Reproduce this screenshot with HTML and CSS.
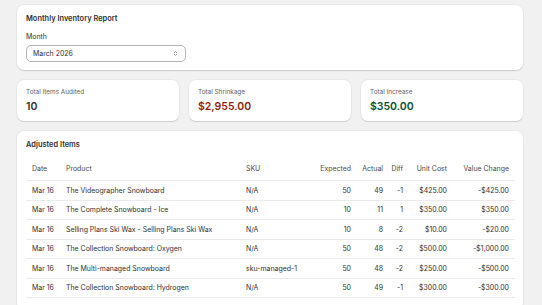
FILE: index.html
```html
<!DOCTYPE html>
<html lang="en">
<head>
    <meta charset="UTF-8">
    <meta name="viewport" content="width=device-width, initial-scale=1.0">
    <title>Monthly Inventory Report</title>
    <link rel="stylesheet" href="styles.css">
</head>
<body>
    <div class="page">
        <div class="card">
            <h2 class="card-title">Monthly Inventory Report</h2>
            <label class="field-label">Month</label>
            <div class="select">
                <span>March 2026</span>
                <svg width="7" height="7" viewBox="0 0 20 20"><path d="M6.5 8 10 4.5 13.5 8M6.5 12 10 15.5 13.5 12" fill="none" stroke="#4a4a4a" stroke-width="1.6" stroke-linecap="round" stroke-linejoin="round"/></svg>
            </div>
        </div>

        <div class="stats">
            <div class="card stat">
                <div class="stat-label">Total Items Audited</div>
                <div class="stat-value">10</div>
            </div>
            <div class="card stat">
                <div class="stat-label">Total Shrinkage</div>
                <div class="stat-value critical">$2,955.00</div>
            </div>
            <div class="card stat">
                <div class="stat-label">Total Increase</div>
                <div class="stat-value success">$350.00</div>
            </div>
        </div>

        <div class="card items">
            <h2 class="card-title">Adjusted Items</h2>
            <table class="data-table">
                <colgroup>
                    <col style="width:34px"><col style="width:180px"><col style="width:70px"><col style="width:47px">
                    <col style="width:32px"><col style="width:20px"><col style="width:44px"><col style="width:62px">
                </colgroup>
                <thead>
                    <tr>
                        <th>Date</th><th>Product</th><th>SKU</th>
                        <th class="num">Expected</th><th class="num">Actual</th><th class="num">Diff</th>
                        <th class="num">Unit Cost</th><th class="num">Value Change</th>
                    </tr>
                </thead>
                <tbody id="rows"></tbody>
            </table>
        </div>
    </div>

    <script>
        const items = [
            ['Mar 16', 'The Videographer Snowboard', 'N/A', 50, 49, -1, '$425.00', '-$425.00'],
            ['Mar 16', 'The Complete Snowboard - Ice', 'N/A', 10, 11, 1, '$350.00', '$350.00'],
            ['Mar 16', 'Selling Plans Ski Wax - Selling Plans Ski Wax', 'N/A', 10, 8, -2, '$10.00', '-$20.00'],
            ['Mar 16', 'The Collection Snowboard: Oxygen', 'N/A', 50, 48, -2, '$500.00', '-$1,000.00'],
            ['Mar 16', 'The Multi-managed Snowboard', 'sku-managed-1', 50, 48, -2, '$250.00', '-$500.00'],
            ['Mar 16', 'The Collection Snowboard: Hydrogen', 'N/A', 50, 49, -1, '$300.00', '-$300.00']
        ];

        const tbody = document.getElementById('rows');
        items.forEach(item => {
            const tr = document.createElement('tr');
            item.forEach((value, i) => {
                const td = document.createElement('td');
                td.textContent = value;
                if (i > 2) td.className = 'num';
                tr.appendChild(td);
            });
            tbody.appendChild(tr);
        });
    </script>
</body>
</html>
```

FILE: styles.css
```css
:root {
    --bg-color: #f1f1f1;
    --text-color: #303030;
    --muted-color: #616161;
    --border-color: #ebebeb;
    --critical-color: #8e1f0b;
    --success-color: #0c5132;
}
body {
    margin: 0;
    background: var(--bg-color);
    color: var(--text-color);
    font-family: 'Inter', 'Noto Sans', sans-serif;
    font-size: 6.95px;
}
.page {
    display: flex;
    flex-direction: column;
    gap: 10px;
    padding: 5px 19px 0 17px;
}
.card {
    background: #fff;
    border-radius: 7px;
    padding: 9px 9px 8px;
    box-shadow:
        0 1px 1px rgba(0, 0, 0, 0.12),
        0 0 0 1px rgba(0, 0, 0, 0.03);
}
.card-title {
    margin: 0;
    font-size: 7.45px;
    line-height: 9px;
    font-weight: 600;
}
.field-label {
    display: block;
    margin-top: 10px;
    line-height: 8px;
}
.select {
    margin-top: 4px;
    width: 160px;
    height: 17px;
    box-sizing: border-box;
    border: 1px solid #b5b5b5;
    border-radius: 5px;
    display: flex;
    align-items: center;
    justify-content: space-between;
    padding: 0 6px 0 6px;
}
.select svg {
    display: block;
}
.stats {
    display: grid;
    grid-template-columns: repeat(3, 1fr);
    gap: 10px;
}
.stat {
    display: flex;
    flex-direction: column;
    gap: 5px;
}
.stat-label {
    color: var(--muted-color);
    font-size: 6.4px;
    line-height: 7px;
}
.stat-value {
    font-size: 10.5px;
    line-height: 12px;
    font-weight: 600;
}
.critical {
    color: var(--critical-color);
}
.success {
    color: var(--success-color);
}
.items {
    padding-right: 8px;
    padding-bottom: 0;
    height: 170px;
}
.data-table {
    margin-top: 8px;
    width: 489px;
    border-collapse: collapse;
    table-layout: fixed;
}
.data-table th,
.data-table td {
    padding: 0 6px;
    text-align: left;
    white-space: nowrap;
    border-bottom: 1px solid var(--border-color);
}
.data-table th {
    height: 23px;
    font-weight: 400;
    color: #4a4a4a;
}
.data-table td {
    height: 18.5px;
}
.data-table .num {
    text-align: right;
    padding-left: 0;
}
```
